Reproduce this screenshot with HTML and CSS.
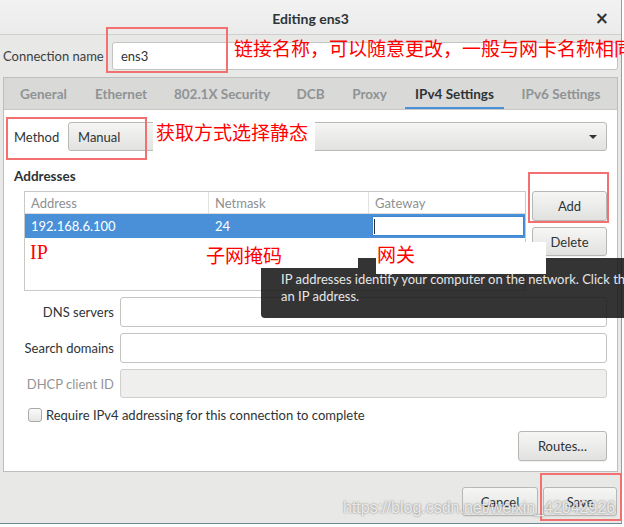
FILE: index.html
```html
<!DOCTYPE html>
<html>
<head>
<meta charset="utf-8">
<link rel="stylesheet" href="styles.css">
</head>
<body>
<div class="window">
  <header class="titlebar">
    <span class="title">Editing ens3</span>
    <span class="close">×</span>
  </header>
  <main class="content">
    <div class="name-row">
      <span class="name-label">Connection name</span>
      <div class="entry name-entry">ens3</div>
    </div>
    <section class="notebook">
      <nav class="tabs">
        <span class="tab t-general">General</span>
        <span class="tab t-ethernet">Ethernet</span>
        <span class="tab t-security">802.1X Security</span>
        <span class="tab t-dcb">DCB</span>
        <span class="tab t-proxy">Proxy</span>
        <span class="tab t-ipv4 active">IPv4 Settings</span>
        <span class="tab t-ipv6">IPv6 Settings</span>
      </nav>
      <div class="page">
        <div class="method-row">
          <span class="method-label">Method</span>
          <div class="combo"><span>Manual</span><span class="arrow"></span></div>
        </div>
        <div class="heading">Addresses</div>
        <div class="addr">
          <div class="table">
            <div class="trow thead">
              <div class="cell c1">Address</div>
              <div class="cell c2">Netmask</div>
              <div class="cell c3">Gateway</div>
            </div>
            <div class="trow sel">
              <div class="cell c1">192.168.6.100</div>
              <div class="cell c2">24</div>
              <div class="cell c3"><div class="cell-entry"><span class="caret"></span></div></div>
            </div>
          </div>
          <div class="addr-buttons">
            <button class="btn add">Add</button>
            <button class="btn delete">Delete</button>
          </div>
        </div>
        <div class="form">
          <span class="flabel">DNS servers</span><div class="entry"></div>
          <span class="flabel">Search domains</span><div class="entry"></div>
          <span class="flabel dim">DHCP client ID</span><div class="entry disabled"></div>
        </div>
        <div class="check-row">
          <span class="checkbox"></span>
          <span class="check-label">Require IPv4 addressing for this connection to complete</span>
        </div>
        <div class="routes-row"><button class="btn routes">Routes…</button></div>
      </div>
    </section>
    <div class="actions">
      <button class="btn cancel">Cancel</button>
      <button class="btn save">Save</button>
    </div>
  </main>

  <div class="tooltip">IP addresses identify your computer on the network. Click the “Add” button to add<br>an IP address.</div>

  <div class="note note-name">链接名称，可以随意更改，一般与网卡名称相同</div>
  <div class="note note-method">获取方式选择静态</div>
  <div class="note note-ip">IP</div>
  <div class="note note-mask">子网掩码</div>
  <div class="note note-gw">网关</div>

  <div class="frame frame-name"></div>
  <div class="frame frame-method"></div>
  <div class="frame frame-add"></div>
  <div class="frame frame-save"></div>

  <div class="watermark">https://blog.csdn.net/weixin_42042926</div>
</div>
</body>
</html>
```

FILE: styles.css
```css
html, body {
  margin: 0;
  padding: 0;
  background: #ffffff;
  overflow: hidden;
}

body {
  width: 624px;
  height: 527px;
  font-family: "Lato", "Noto Sans", sans-serif;
  font-size: 13px;
  color: #2e3436;
}

.window {
  position: relative;
  width: 621px;
  height: 523px;
  border-right: 1px solid #9c9c9c;
  border-bottom: 1px solid #6f8797;
  background: #e8e8e7;
}

/* title bar */
.titlebar {
  height: 34px;
  border-bottom: 1px solid #cfcfcd;
  background: linear-gradient(#f2f2f2, #ebebeb);
  display: flex;
  align-items: center;
  justify-content: center;
  position: relative;
}

.title {
  font-weight: bold;
  font-size: 14px;
  color: #2e3436;
  margin-top: 3px;
}

.close {
  position: absolute;
  right: 12px;
  top: 10px;
  font-size: 17px;
  line-height: 17px;
  font-weight: bold;
  color: #2e3436;
  font-family: "DejaVu Sans", sans-serif;
}

/* content */
.content {
  padding: 7px 3px 0 3px;
}

.name-row {
  display: flex;
  align-items: center;
  height: 28px;
}

.name-label {
  width: 109px;
  flex: none;
  color: #3a3f41;
}

.entry {
  background: #fff;
  border: 1px solid #c4c4c2;
  border-radius: 3px;
  box-sizing: border-box;
  height: 30px;
  display: flex;
  align-items: center;
  padding-left: 8px;
}

.name-entry {
  flex: 1;
  height: 28px;
  color: #2e3436;
}

/* notebook */
.notebook {
  margin-top: 7px;
  border: 1px solid #bebebc;
  background: #fff;
}

.tabs {
  height: 32px;
  background: #d9d9d8;
  border-bottom: 1px solid #c8c8c6;
  box-sizing: border-box;
  display: flex;
  padding-left: 2px;
  overflow: hidden;
}

.tab {
  position: relative;
  flex: none;
  display: flex;
  align-items: center;
  justify-content: center;
  white-space: nowrap;
  color: #8f9394;
  font-weight: bold;
  font-size: 13.5px;
}

.t-general { width: 75px; }
.t-ethernet { width: 80px; }
.t-security { width: 122px; }
.t-dcb { width: 55px; }
.t-proxy { width: 63px; }
.t-ipv4 { width: 107px; }
.t-ipv6 { width: 106px; }

.tab.active {
  color: #2e3436;
}

.tab.active::after {
  content: "";
  position: absolute;
  left: 4px;
  right: 4px;
  bottom: -1px;
  height: 3px;
  background: #4a90d9;
}

.page {
  padding: 12px 10px 10px 10px;
}

.method-row {
  display: flex;
  align-items: center;
  height: 29px;
}

.method-label {
  width: 54px;
  flex: none;
}

.combo {
  flex: 1;
  height: 29px;
  box-sizing: border-box;
  border: 1px solid #b9b9b7;
  border-radius: 3px;
  background: linear-gradient(#f5f5f4, #e2e2e0);
  display: flex;
  align-items: center;
  justify-content: space-between;
  padding: 0 9px 0 9px;
}

.arrow {
  width: 0;
  height: 0;
  border-left: 4px solid transparent;
  border-right: 4px solid transparent;
  border-top: 4px solid #2e3436;
}

.heading {
  margin-top: 17px;
  line-height: 16px;
  font-weight: bold;
  font-size: 13.5px;
}

.addr {
  margin-top: 7px;
  margin-left: 10px;
  display: flex;
  gap: 6px;
}

.table {
  width: 502px;
  height: 100px;
  box-sizing: border-box;
  border: 1px solid #c9c9c7;
  background: #fff;
}

.trow {
  display: grid;
  grid-template-columns: 184px 160px 1fr;
}

.thead {
  height: 21px;
  border-bottom: 1px solid #dcdcda;
}

.thead .cell {
  color: #8d9091;
  border-right: 1px solid #e2e2e0;
}

.thead .c3 {
  border-right: none;
}

.cell {
  box-sizing: border-box;
  padding-left: 6px;
  display: flex;
  align-items: center;
}

.sel {
  height: 24px;
  background: #4a90d9;
  color: #ffffff;
}

.sel .c3 {
  padding: 2px 1px 2px 3px;
}

.cell-entry {
  flex: 1;
  height: 20px;
  box-sizing: border-box;
  background: #fff;
  border: 1px solid #3f85cf;
  display: flex;
  align-items: center;
  padding-left: 1px;
}

.caret {
  width: 1px;
  height: 15px;
  background: #2e3436;
}

.addr-buttons {
  width: 75px;
  display: flex;
  flex-direction: column;
  gap: 6px;
}

.btn {
  font-family: inherit;
  font-size: 13px;
  color: #2e3436;
  border: 1px solid #b7b7b5;
  border-radius: 3px;
  background: linear-gradient(#f6f6f5, #e1e1df);
  box-shadow: 0 1px 1px rgba(0, 0, 0, 0.06);
  padding: 0;
  margin: 0;
  box-sizing: border-box;
}

.add {
  height: 30px;
}

.delete {
  height: 29px;
}

.form {
  margin-top: 6px;
  display: grid;
  grid-template-columns: 100px 1fr;
  column-gap: 6px;
  row-gap: 6px;
  align-items: center;
}

.flabel {
  text-align: right;
}

.flabel.dim {
  color: #929596;
}

.entry.disabled {
  background: #efefee;
  border-color: #d0d0ce;
  height: 29px;
}

.check-row {
  margin-top: 10px;
  margin-left: 14px;
  display: flex;
  align-items: center;
  gap: 4px;
  height: 14px;
}

.checkbox {
  width: 14px;
  height: 14px;
  box-sizing: border-box;
  border: 1px solid #a9a9a7;
  border-radius: 3px;
  background: linear-gradient(#fafafa, #e6e6e4);
}

.routes-row {
  margin-top: 9px;
  display: flex;
  justify-content: flex-end;
}

.routes {
  width: 89px;
  height: 30px;
}

.actions {
  display: flex;
  justify-content: flex-end;
  gap: 5px;
  padding: 15px 1px 0 0;
}

.cancel {
  width: 76px;
  height: 29px;
}

.save {
  width: 74px;
  height: 29px;
}

/* tooltip */
.tooltip {
  position: absolute;
  left: 261px;
  top: 258px;
  width: 363px;
  height: 60px;
  box-sizing: border-box;
  padding: 13px 0 0 20px;
  background: rgba(24, 24, 24, 0.88);
  border-radius: 4px 0 0 4px;
  color: #e6e6e6;
  font-size: 13px;
  line-height: 17px;
  white-space: nowrap;
  overflow: hidden;
}

/* annotations */
.note {
  position: absolute;
  color: #ff0000;
  font-family: "Noto Sans CJK SC", "Noto Sans", sans-serif;
  font-size: 19px;
  line-height: 24px;
  white-space: nowrap;
}

.note-name {
  left: 234px;
  top: 36px;
  width: 390px;
  overflow: hidden;
}

.note-method {
  left: 153px;
  top: 117px;
  width: 162px;
  height: 35px;
  background: #fff;
  padding: 3px 0 0 3px;
  box-sizing: border-box;
}

.note-ip {
  left: 30px;
  top: 240px;
  font-family: "Liberation Serif", serif;
  font-size: 20px;
}

.note-mask {
  left: 200px;
  top: 240px;
  width: 158px;
  height: 28px;
  background: #fff;
  padding: 3px 0 0 6px;
  box-sizing: border-box;
}

.note-gw {
  left: 376px;
  top: 242px;
  width: 170px;
  height: 32px;
  background: #fff;
  padding: 0 0 0 1px;
  box-sizing: border-box;
}

.frame {
  position: absolute;
  border: 2px solid #f27070;
  box-sizing: border-box;
}

.frame-name {
  left: 106px;
  top: 27px;
  width: 122px;
  height: 46px;
}

.frame-method {
  left: 6px;
  top: 117px;
  width: 141px;
  height: 43px;
}

.frame-add {
  left: 528px;
  top: 172px;
  width: 81px;
  height: 51px;
}

.frame-save {
  left: 540px;
  top: 473px;
  width: 82px;
  height: 48px;
}

.watermark {
  position: absolute;
  left: 343px;
  top: 498px;
  font-family: "Liberation Sans", Arial, sans-serif;
  font-size: 16px;
  line-height: 20px;
  color: rgba(255, 255, 255, 0.8);
  text-shadow: 0 0 2px rgba(90, 90, 90, 0.85);
  white-space: nowrap;
}
```
